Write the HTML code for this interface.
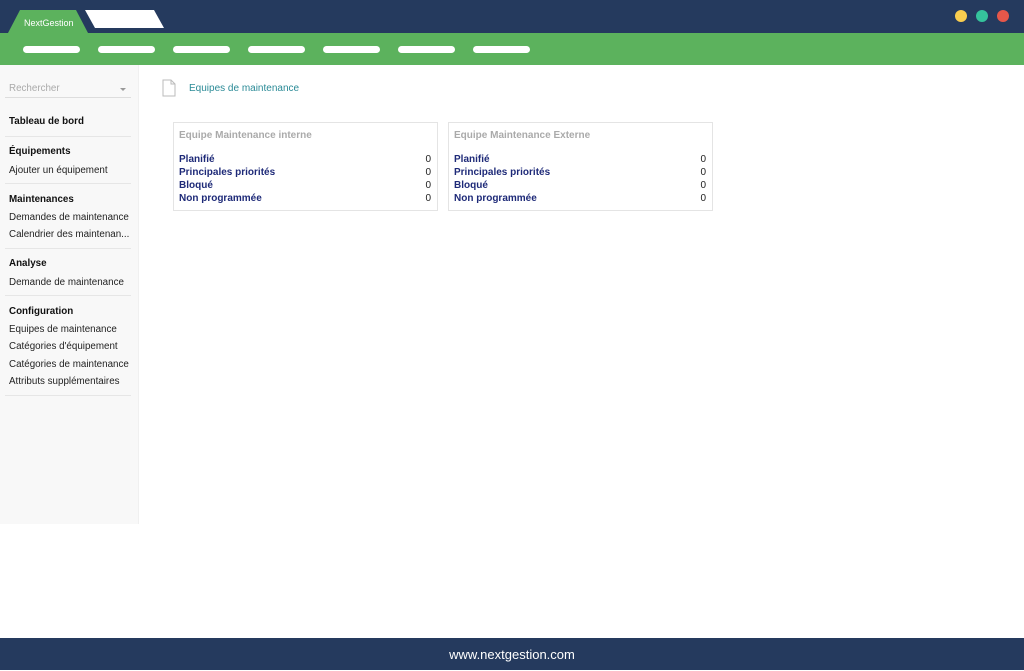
<!DOCTYPE html>
<html><head><meta charset="utf-8"><style>
*{margin:0;padding:0;box-sizing:border-box}
body{width:1024px;height:670px;position:relative;background:#fff;font-family:"Liberation Sans",Arial,sans-serif;overflow:hidden}
.abs{position:absolute}
.top{left:0;top:0;width:1024px;height:34px;background:#253a5e}
.green{left:0;top:33px;width:1024px;height:32px;background:#5cb25d}
.pill{position:absolute;top:46px;height:7px;width:57px;background:#fff;border-radius:4px}
.dot{position:absolute;top:10px;width:12px;height:12px;border-radius:50%}
.side{left:0;top:65px;width:139px;height:459px;background:#f8f8f8;border-right:1px solid #f0f0f0}
.t{position:absolute;left:9px;font-size:9.8px;color:#222;white-space:nowrap}
.b{font-weight:bold;color:#111}
.sep{position:absolute;left:5px;width:126px;height:1px;background:#e6e6e6}
.card{position:absolute;top:122px;width:265px;height:89px;border:1px solid #e4e4e4;background:#fff}
.card .h{position:absolute;left:5px;top:7px;font-size:10px;font-weight:bold;color:#aaa}
.row{position:absolute;left:5px;right:6px;font-size:10px;font-weight:bold;color:#1e2a78}
.row span{position:absolute;right:0;color:#222;font-weight:normal}
.foot{left:0;top:638px;width:1024px;height:32px;background:#253a5e;color:#fff;font-size:13px;text-align:center;line-height:33px}
</style></head><body>
<div class="abs top"></div>
<div class="abs green"></div>
<svg class="abs" style="left:0;top:0" width="180" height="34">
<polygon points="8,33 20,10 76,10 88,33" fill="#5cb25d"/>
<polygon points="85,10 154,10 164,28 95,28" fill="#fff"/>
<text x="24" y="26" font-size="9" fill="#fff" font-family="Liberation Sans">NextGestion</text>
</svg>
<div class="pill" style="left:23px"></div><div class="pill" style="left:98px"></div><div class="pill" style="left:173px"></div><div class="pill" style="left:248px"></div><div class="pill" style="left:323px"></div><div class="pill" style="left:398px"></div><div class="pill" style="left:473px"></div>
<div class="dot" style="left:955px;background:#f9cd4f"></div>
<div class="dot" style="left:976px;background:#35c39c"></div>
<div class="dot" style="left:997px;background:#e6574a"></div>
<div class="abs side"></div>
<div class="t" style="top:83px;color:#aaa">Rechercher</div>
<div class="abs" style="left:120px;top:88px;border-left:3px solid transparent;border-right:3px solid transparent;border-top:3px solid #999"></div>
<div class="sep" style="top:97px;background:#ddd"></div>
<div class="t b" style="top:116px">Tableau de bord</div>
<div class="sep" style="top:136px"></div>
<div class="t b" style="top:146px">Équipements</div>
<div class="t" style="top:165px">Ajouter un équipement</div>
<div class="sep" style="top:183px"></div>
<div class="t b" style="top:194px">Maintenances</div>
<div class="t" style="top:212px">Demandes de maintenance</div>
<div class="t" style="top:229px">Calendrier des maintenan...</div>
<div class="sep" style="top:248px"></div>
<div class="t b" style="top:258px">Analyse</div>
<div class="t" style="top:277px">Demande de maintenance</div>
<div class="sep" style="top:295px"></div>
<div class="t b" style="top:306px">Configuration</div>
<div class="t" style="top:324px">Equipes de maintenance</div>
<div class="t" style="top:341px">Catégories d'équipement</div>
<div class="t" style="top:359px">Catégories de maintenance</div>
<div class="t" style="top:376px">Attributs supplémentaires</div>
<div class="sep" style="top:395px"></div>
<svg class="abs" style="left:162px;top:79px" width="14" height="18"><path d="M1 1H9L13 5V17H1Z M9 1V5H13" fill="none" stroke="#bbb" stroke-width="1"/></svg>
<div class="abs" style="left:189px;top:83px;font-size:10px;color:#2a8a96">Equipes de maintenance</div>
<div class="card" style="left:173px"><div class="h">Equipe Maintenance interne</div>
<div class="row" style="top:31px">Planifié<span>0</span></div>
<div class="row" style="top:44px">Principales priorités<span>0</span></div>
<div class="row" style="top:57px">Bloqué<span>0</span></div>
<div class="row" style="top:70px">Non programmée<span>0</span></div></div>
<div class="card" style="left:448px"><div class="h">Equipe Maintenance Externe</div>
<div class="row" style="top:31px">Planifié<span>0</span></div>
<div class="row" style="top:44px">Principales priorités<span>0</span></div>
<div class="row" style="top:57px">Bloqué<span>0</span></div>
<div class="row" style="top:70px">Non programmée<span>0</span></div></div>
<div class="abs foot">www.nextgestion.com</div>
</body></html>
